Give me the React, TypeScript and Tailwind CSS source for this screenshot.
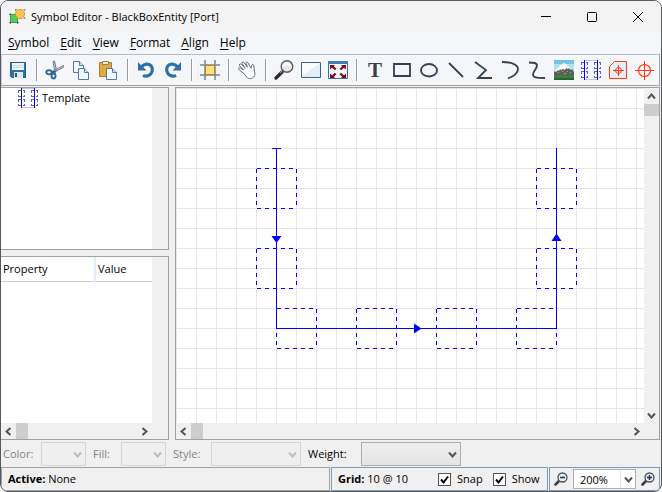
import { useState } from 'react'
import type { ReactNode } from 'react'

const INK = '#36404f'

function Icon({ children, size = 20 }: { children: ReactNode; size?: number }) {
  return (
    <svg width={size} height={size} viewBox="0 0 20 20" fill="none" className="block">
      {children}
    </svg>
  )
}

function AppIcon() {
  return (
    <svg width="17" height="16" viewBox="0 0 17 16" className="block">
      <path d="M1.500 5.500h7v8h-7z" fill="#4fcf59" stroke="#459a4c" />
      <path d="M0 5.500h2M0 13.500h2M1.500 4v2M1.500 13v2M8.500 13v2M8 13.500h2" stroke="#4a5a50" strokeWidth=".8" />
      <circle cx="11" cy="5" r="4.600" fill="#fbc44e" stroke="#c9963c" strokeWidth=".9" />
      <path d="M6 .500h2M6.500 0v2M14.500 .500h2M15.500 0v2M14.500 9.500h2M15.500 8v2" stroke="#9c8660" strokeWidth=".8" />
    </svg>
  )
}

function SaveIcon() {
  return (
    <Icon>
      <path d="M2 2h16v16H4l-2-2z" fill="#2f74a8" />
      <path d="M2.500 2.500h15v15H4.200l-1.700-1.700z" stroke="#235f8f" />
      <path d="M4 3h12v7H4z" fill="#f4fafd" />
      <path d="M5 5h10v1H5zM5 7h10v1H5z" fill="#b9d9ea" />
      <path d="M6 12h9v6H6z" fill="#dbe9f2" />
      <path d="M7 13h2v4H7z" fill="#28567c" />
    </Icon>
  )
}

function CutIcon() {
  return (
    <Icon>
      <path d="M8 1.500 9.500 1l2.200 10-1.700 1z" fill="#d7dee4" stroke="#5e6d7a" strokeWidth=".9" />
      <path d="M18.500 5.500 18.200 7.500 8.500 12.500 8 11z" fill="#d7dee4" stroke="#5e6d7a" strokeWidth=".9" />
      <ellipse cx="4" cy="12.300" rx="2.700" ry="2.100" stroke="#2f6796" strokeWidth="1.900" />
      <ellipse cx="8.500" cy="16" rx="2" ry="2.500" stroke="#2f6796" strokeWidth="1.900" />
      <path d="m6.500 12 3.500-.5-1 2.500" stroke="#2f6796" strokeWidth="1.800" />
    </Icon>
  )
}

function Sheet({ x, y }: { x: number; y: number }) {
  return (
    <g transform={`translate(${x} ${y})`}>
      <path d="M.500.500h6l4 4v7h-10z" fill="#f4f9ff" stroke="#5577a3" />
      <path d="M6.500.500v4h4" fill="#cfe0f2" stroke="#5577a3" />
    </g>
  )
}

function CopyIcon() {
  return (
    <Icon>
      <Sheet x={1} y={1} />
      <Sheet x={6} y={8} />
    </Icon>
  )
}

function PasteIcon() {
  return (
    <Icon>
      <path d="M.500 2.500h12v14H.500z" fill="#e3ab3c" stroke="#b07d22" />
      <path d="M3.500 1.500h6v3h-6z" fill="#ece8dc" stroke="#8a8169" />
      <Sheet x={7} y={8} />
    </Icon>
  )
}

function UndoIcon({ flip = false }: { flip?: boolean }) {
  return (
    <Icon>
      <g transform={flip ? 'translate(20 0) scale(-1 1)' : undefined}>
        <path d="M5 7.500C8 3.500 13 3 15.200 6c2.300 3 1 7.500-2.200 9.300-2 1-4.200 1-6 0" stroke="#2d71a5" strokeWidth="3.200" />
        <path d="M2 2v8.500h8.500L7.800 7.800 4.800 5z" fill="#2d71a5" />
      </g>
    </Icon>
  )
}

function FrameIcon() {
  return (
    <Icon>
      <path d="M5 0v20M15 0v20M0 5h20M0 15h20" stroke="#74859b" strokeWidth="1.500" />
      <path d="M5.500 5.500h9v9h-9z" fill="#ffe07c" stroke="#b8861d" />
    </Icon>
  )
}

function HandIcon() {
  return (
    <Icon>
      <path
        d="M8 14.500 2.200 9.800C.8 8.500 2 7.200 3.300 8l3.200 2L2.600 5.800C1.600 4.600 3 3.300 4.200 4.300l4 3.900-3-4.500c-.8-1.400.8-2.300 1.800-1.200l3.500 4.700-1.500-3.600c-.5-1.400 1.200-2 1.900-.8l3.200 5.500c.5-.4.200-2.700 1-3.600.7-.7 1.600 0 1.700 1l.6 5.500c.8 2.300 1 4.300-1.600 6.500-2.800 2-5.800.8-7.800-3.200z"
        fill="#fdfeff"
        stroke="#59677a"
        strokeWidth="1"
      />
    </Icon>
  )
}

function FindIcon() {
  return (
    <Icon>
      <path d="m8 12-6 6" stroke="#292929" strokeWidth="3.200" strokeLinecap="round" />
      <path d="m8 11-2 2" stroke="#8d8d8d" strokeWidth="1.500" />
      <circle cx="13" cy="6.500" r="5.800" fill="#e9e9e9" stroke="#5a5a5a" strokeWidth="1.400" />
      <path d="M9.300 7a3.500 3.500 0 0 1 6.800-1.200" stroke="#ffffff" strokeWidth="2" />
    </Icon>
  )
}

function PageIcon() {
  return (
    <Icon>
      <path d="M.500 2.500h19v15H.500z" fill="#e3eefa" stroke="#3f6189" />
      <path d="M1 3h18L1 16z" fill="#fafcff" />
    </Icon>
  )
}

function FitIcon() {
  return (
    <Icon>
      <path d="M.500 1.500h19v17H.500z" fill="#f6faff" stroke="#3a6f9f" />
      <path d="M0 1h20v3H0z" fill="#3f7fb5" />
      <path d="M2 5h5L5.800 6.300l2.700 2.500-1.500 1.500-3-2.500L2 9.500zM18 5h-5l1.200 1.300-2.700 2.500 1.500 1.500 3-2.500 2 1.700zM2 18h5l-1.200-1.300 2.700-2.500L7 12.700l-3 2.500-2-1.700zM18 18h-5l1.200-1.300-2.700-2.500 1.500-1.500 3 2.500 2-1.700z" fill="#7c1111" />
    </Icon>
  )
}

function ImageIcon() {
  return (
    <Icon>
      <path d="M0 0h20v20H0z" fill="#74c2e8" />
      <path d="M0 4h20v8H0z" fill="#b0e0f4" />
      <path d="M0 12 8 4l2-1 2 1 8 8v2H0z" fill="#fbfdfe" />
      <path d="m0 12 1-1 1 1 2-2 1 1 1-2 1 1 2-1 2 1 1-2 2 1 1-1 2 2 1-1 2 3v4H0z" fill="#5d605a" />
      <path d="M4 12h1v1H4zM8 11h1v1H8zM13 11h1v1h-1zM10 13h2v1h-2zM16 12h1v1h-1z" fill="#a5a8a3" />
      <path d="M0 15h20v5H0z" fill="#3c803d" />
      <path d="M0 18h20v2H0z" fill="#2a6230" />
      <path d="M2 15h2v1H2zM7 15h2v1H7zM12 15h3v1h-3z" fill="#565c50" />
    </Icon>
  )
}

function TemplateIcon() {
  return (
    <svg width="20" height="20" viewBox="0 0 20 20" fill="none" className="block" shapeRendering="crispEdges">
      <path d="M.500 2.500h6v6h-6zM.500 11.500h6v6h-6zM13.500 2.500h6v6h-6zM13.500 11.500h6v6h-6z" stroke="#5c5cea" strokeDasharray="4 2" strokeDashoffset="2" />
      <path d="M4 .500h13M4 19.500h13" stroke="#c4c4f7" />
      <path d="M3.500 0v20M16.500 0v20" stroke="#0808dd" />
    </svg>
  )
}

function PortIcon() {
  return (
    <Icon>
      <path d="M6.500 1.500h12v17H1.500v-12z" fill="#e6eff9" stroke="#fb3b12" />
      <circle cx="10.500" cy="10.500" r="3" stroke="#fb3b12" />
      <path d="M10.500 5v11M5 10.500h11" stroke="#fb3b12" />
    </Icon>
  )
}

function TargetIcon() {
  return (
    <Icon>
      <circle cx="9.500" cy="10.500" r="6" stroke="#fb3b12" strokeWidth="1.200" />
      <path d="M9.500 1v19M0 10.500h19" stroke="#fb3b12" />
    </Icon>
  )
}

function Stroke({ d }: { d: string }) {
  return (
    <Icon>
      <path d={d} stroke={INK} strokeWidth="1.800" />
    </Icon>
  )
}

type Tool = { name: string; icon: ReactNode }

const tools: Tool[][] = [
  [{ name: 'Save', icon: <SaveIcon /> }],
  [
    { name: 'Cut', icon: <CutIcon /> },
    { name: 'Copy', icon: <CopyIcon /> },
    { name: 'Paste', icon: <PasteIcon /> },
  ],
  [
    { name: 'Undo', icon: <UndoIcon /> },
    { name: 'Redo', icon: <UndoIcon flip /> },
  ],
  [{ name: 'Bounds', icon: <FrameIcon /> }],
  [{ name: 'Pan', icon: <HandIcon /> }],
  [
    { name: 'Zoom', icon: <FindIcon /> },
    { name: 'Page', icon: <PageIcon /> },
    { name: 'Fit', icon: <FitIcon /> },
  ],
  [
    { name: 'Text', icon: <span className="font-['Liberation_Serif',serif] text-[21px] leading-5 font-bold text-[#36404f]">T</span> },
    { name: 'Rectangle', icon: <Stroke d="M2 4h16v12H2z" /> },
    { name: 'Ellipse', icon: <Stroke d="M18 10.500c0 3.600-3.600 6-8 6s-8-2.400-8-6 3.600-6.500 8-6.500 8 2.900 8 6.500z" /> },
    { name: 'Line', icon: <Stroke d="m3 3 14 14" /> },
    { name: 'Polyline', icon: <Stroke d="m2 2 11 8-8 8h14" /> },
    { name: 'Curve', icon: <Stroke d="M2 2c9 0 16 2.500 16 7 0 4-5 7.500-10 9.500" /> },
    { name: 'Spline', icon: <Stroke d="M2 2.500c4 0 8 0 8 3 0 3-4 6-4 9 0 3 3 3.500 12 3.500" /> },
    { name: 'Image', icon: <ImageIcon /> },
    { name: 'Template symbol', icon: <TemplateIcon /> },
    { name: 'Port', icon: <PortIcon /> },
    { name: 'Origin', icon: <TargetIcon /> },
  ],
]

const menus = ['Symbol', 'Edit', 'View', 'Format', 'Align', 'Help']

function TitleBar() {
  return (
    <header className="flex h-[31px] shrink-0 items-center bg-[#f3f3f3] pl-2">
      <AppIcon />
      <h1 className="flex-1 pl-[5px]">Symbol Editor - BlackBoxEntity [Port]</h1>
      <button aria-label="Minimize" className="flex h-full w-[46px] items-center justify-center">
        <svg width="10" height="10" viewBox="0 0 10 10"><path d="M0 4.500h10" stroke="#000" /></svg>
      </button>
      <button aria-label="Maximize" className="flex h-full w-[46px] items-center justify-center">
        <svg width="10" height="10" viewBox="0 0 10 10" fill="none"><rect x=".5" y=".5" width="9" height="9" rx="1" stroke="#000" /></svg>
      </button>
      <button aria-label="Close" className="flex h-full w-[46px] items-center justify-center">
        <svg width="10" height="10" viewBox="0 0 10 10"><path d="m0 0 10 10M10 0 0 10" stroke="#000" /></svg>
      </button>
    </header>
  )
}

function MenuBar() {
  return (
    <nav className="flex h-[22px] shrink-0 items-center gap-[11px] bg-[#f4f6f9] pl-[7px] text-[12px]">
      {menus.map((m) => (
        <button key={m}>
          <span className="underline underline-offset-2">{m[0]}</span>{m.slice(1)}
        </button>
      ))}
    </nav>
  )
}

function ToolBar() {
  return (
    <div className="mr-px flex h-8 shrink-0 items-center border border-t-[#b3bcc9] border-r-[#a5a5a5] border-b-[#a0a0a0] border-l-[#c8ccd2] bg-[#f4f6f9] pl-[3px]">
      {tools.map((group, i) => (
        <div key={i} className="flex items-center">
          {i > 0 && <span className="mr-1 ml-[5px] h-[22px] w-[2px] border-r border-white bg-[#9a9a9a]" />}
          <div className="flex gap-px">
            {group.map((t) => (
              <button key={t.name} aria-label={t.name} className="flex h-7 w-[26px] items-center justify-center">
                {t.icon}
              </button>
            ))}
          </div>
        </div>
      ))}
    </div>
  )
}

function Chevron({ dir, color = '#555' }: { dir: 'up' | 'down' | 'left' | 'right'; color?: string }) {
  const d = {
    up: 'm1 6.500 3.500-4L8 6.500',
    down: 'm1 2.500 3.500 4L8 2.500',
    left: 'm6.500 1-4 3.500 4 3.500',
    right: 'm2.500 1 4 3.500-4 3.500',
  }[dir]
  return (
    <svg width="9" height="9" viewBox="0 0 9 9" fill="none" className="block">
      <path d={d} stroke={color} strokeWidth="2" />
    </svg>
  )
}

function HScroll() {
  return (
    <div className="flex h-4 shrink-0 bg-[#f0f0f0]">
      <button aria-label="Scroll left" className="flex w-[15px] items-center justify-center"><Chevron dir="left" /></button>
      <span className="w-3 bg-[#cdcdcd]" />
      <button aria-label="Scroll right" className="ml-auto flex w-[15px] items-center justify-center"><Chevron dir="right" /></button>
    </div>
  )
}

function SidePanel() {
  return (
    <aside className="flex w-[168px] shrink-0 flex-col gap-[6px]">
      <div className="flex h-[163px] shrink-0 border border-l-0 border-[#a0a0a0]">
        <ul className="flex-1 bg-white">
          <li className="flex items-center gap-1 pl-[17px]"><TemplateIcon />Template</li>
        </ul>
        <div className="w-4 bg-[#f0f0f0]" />
      </div>
      <div className="flex flex-1 border border-l-0 border-[#a0a0a0]">
        <div className="flex flex-1 flex-col bg-white">
          <table className="w-full table-fixed text-left">
            <thead>
              <tr className="h-6 border-b border-[#d0d0d0]">
                <th className="w-[94px] border-r-2 border-[#e3eefb] p-0 pl-[2px] font-normal">Property</th>
                <th className="p-0 pl-[2px] font-normal">Value</th>
              </tr>
            </thead>
          </table>
          <div className="flex-1" />
          <HScroll />
        </div>
        <div className="w-4 bg-[#f0f0f0]" />
      </div>
    </aside>
  )
}

// top left corners of the 40px placeholder boxes
const boxes = [
  [80, 80], [80, 160], [360, 80], [360, 160],
  [100, 220], [180, 220], [260, 220], [340, 220],
]

function Drawing() {
  return (
    <svg width="100%" height="100%" fill="none" className="block" shapeRendering="crispEdges">
      <defs>
        <pattern id="grid" width="20" height="20" patternUnits="userSpaceOnUse">
          <path d="M.500 0v20M0 .500h20" stroke="#e6e6e6" />
        </pattern>
      </defs>
      <rect width="100%" height="100%" fill="#fff" />
      <rect width="100%" height="100%" fill="url(#grid)" />
      <g stroke="#0000ff">
        {boxes.map(([x, y]) => (
          <path
            key={`${x}-${y}`}
            d={`M${x + 0.5} ${y + 0.5}h40M${x + 0.5} ${y + 40.5}h40M${x + 0.5} ${y + 0.5}v40M${x + 40.5} ${y + 0.5}v40`}
            strokeDasharray="4 4"
          />
        ))}
        <path d="M96 60.500h9M100.500 60v180.500h280V60" />
      </g>
      <g fill="#0000ff" shapeRendering="auto">
        <path d="M95.500 148h10l-5 7z" />
        <path d="M238 235.500v10l7.500-5z" />
        <path d="M375.500 153h10l-5-7.500z" />
      </g>
    </svg>
  )
}

function Canvas() {
  return (
    <main className="mr-px flex min-w-0 flex-1 border border-[#a0a0a0]">
      <div className="flex min-w-0 flex-1 flex-col">
        <div className="min-h-0 flex-1"><Drawing /></div>
        <HScroll />
      </div>
      <div className="flex w-[15px] flex-col bg-[#f0f0f0] pb-4">
        <button aria-label="Scroll up" className="flex h-4 items-center justify-center"><Chevron dir="up" /></button>
        <span className="h-3 bg-[#cdcdcd]" />
        <button aria-label="Scroll down" className="mt-auto flex h-4 items-center justify-center"><Chevron dir="down" /></button>
      </div>
    </main>
  )
}

function StyleBar() {
  return (
    <div className="flex h-[27px] shrink-0 items-center pl-[2px] text-[#838383]">
      <label htmlFor="color" className="w-[38px]">Color:</label>
      <div className="relative mr-[7px] w-[45px]">
        <select id="color" disabled className="block h-6 w-full appearance-none border border-[#d5d5d5] bg-[#efefef]" />
        <span className="pointer-events-none absolute top-2 right-1"><Chevron dir="down" color="#bdbdbd" /></span>
      </div>
      <label htmlFor="fill" className="w-7">Fill:</label>
      <div className="relative mr-[7px] w-[45px]">
        <select id="fill" disabled className="block h-6 w-full appearance-none border border-[#d5d5d5] bg-[#efefef]" />
        <span className="pointer-events-none absolute top-2 right-1"><Chevron dir="down" color="#bdbdbd" /></span>
      </div>
      <label htmlFor="style" className="w-[38px]">Style:</label>
      <div className="relative mr-[7px] w-[90px]">
        <select id="style" disabled className="block h-6 w-full appearance-none border border-[#d5d5d5] bg-[#efefef]" />
        <span className="pointer-events-none absolute top-2 right-1"><Chevron dir="down" color="#bdbdbd" /></span>
      </div>
      <label htmlFor="weight" className="w-[53px] text-black">Weight:</label>
      <div className="relative w-[100px]">
        <select id="weight" className="block h-6 w-full appearance-none border border-[#acacac] bg-linear-to-b from-[#efefef] to-[#e4e4e4]" />
        <span className="pointer-events-none absolute top-2 right-1"><Chevron dir="down" /></span>
      </div>
    </div>
  )
}

function Check({ label }: { label: string }) {
  const [on, setOn] = useState(true)
  return (
    <label className="flex items-center gap-[6px]">
      <span className="relative block">
        <input
          type="checkbox"
          checked={on}
          onChange={() => setOn(!on)}
          className="peer block size-[13px] appearance-none border border-[#555] bg-white"
        />
        <svg width="13" height="13" viewBox="0 0 13 13" fill="none" className="pointer-events-none absolute inset-0 hidden peer-checked:block">
          <path d="m3 6.500 2.500 3 4.500-6" stroke="#000" strokeWidth="2" />
        </svg>
      </span>
      {label}
    </label>
  )
}

function ZoomGlyph({ plus = false }: { plus?: boolean }) {
  return (
    <svg width="14" height="14" viewBox="0 0 14 14" fill="none" className="block">
      <path d="M5.500 8.500 1.500 12.500" stroke="#3a3f46" strokeWidth="2.600" strokeLinecap="round" />
      <circle cx="8.500" cy="5.500" r="4.500" fill="#e6edf3" stroke="#4a5058" strokeWidth="1.300" />
      <path d={plus ? 'M6 5.500h5M8.500 3v5' : 'M6 5.500h5'} stroke="#1f3550" strokeWidth="1.500" />
    </svg>
  )
}

function StatusBar() {
  return (
    <footer className="mr-px flex h-6 shrink-0 gap-px">
      <div className="flex flex-1 items-center border border-[#a0a0a0] pl-[6px]">
        <p><b>Active:</b> None</p>
      </div>
      <div className="flex w-[217px] items-center border border-[#7f9db9] pl-[6px]">
        <p className="w-[100px]"><b>Grid:</b> 10 @ 10</p>
        <div className="flex gap-[10px]">
          <Check label="Snap" />
          <Check label="Show" />
        </div>
      </div>
      <div className="flex w-[111px] items-center justify-between border border-[#7f9db9] px-1">
        <button aria-label="Zoom out"><ZoomGlyph /></button>
        <div className="relative">
          <select aria-label="Zoom level" className="block h-5 w-[63px] appearance-none border border-[#b0b0b0] bg-white pl-[6px]">
            <option>200%</option>
          </select>
          <span className="pointer-events-none absolute top-[1px] right-[1px] flex h-[18px] w-[15px] items-center justify-center border-l border-[#e6e6e6]">
            <Chevron dir="down" />
          </span>
        </div>
        <button aria-label="Zoom in"><ZoomGlyph plus /></button>
      </div>
    </footer>
  )
}

export default function App() {
  return (
    <div className="flex h-screen flex-col overflow-hidden rounded-lg border border-[#55585c] bg-[#f0f0f0] font-['Open_Sans','Noto_Sans',sans-serif] text-[11px] leading-5 text-black">
      <TitleBar />
      <MenuBar />
      <ToolBar />
      <div className="mt-[1px] flex min-h-0 flex-1 gap-[6px]">
        <SidePanel />
        <Canvas />
      </div>
      <StyleBar />
      <StatusBar />
    </div>
  )
}
